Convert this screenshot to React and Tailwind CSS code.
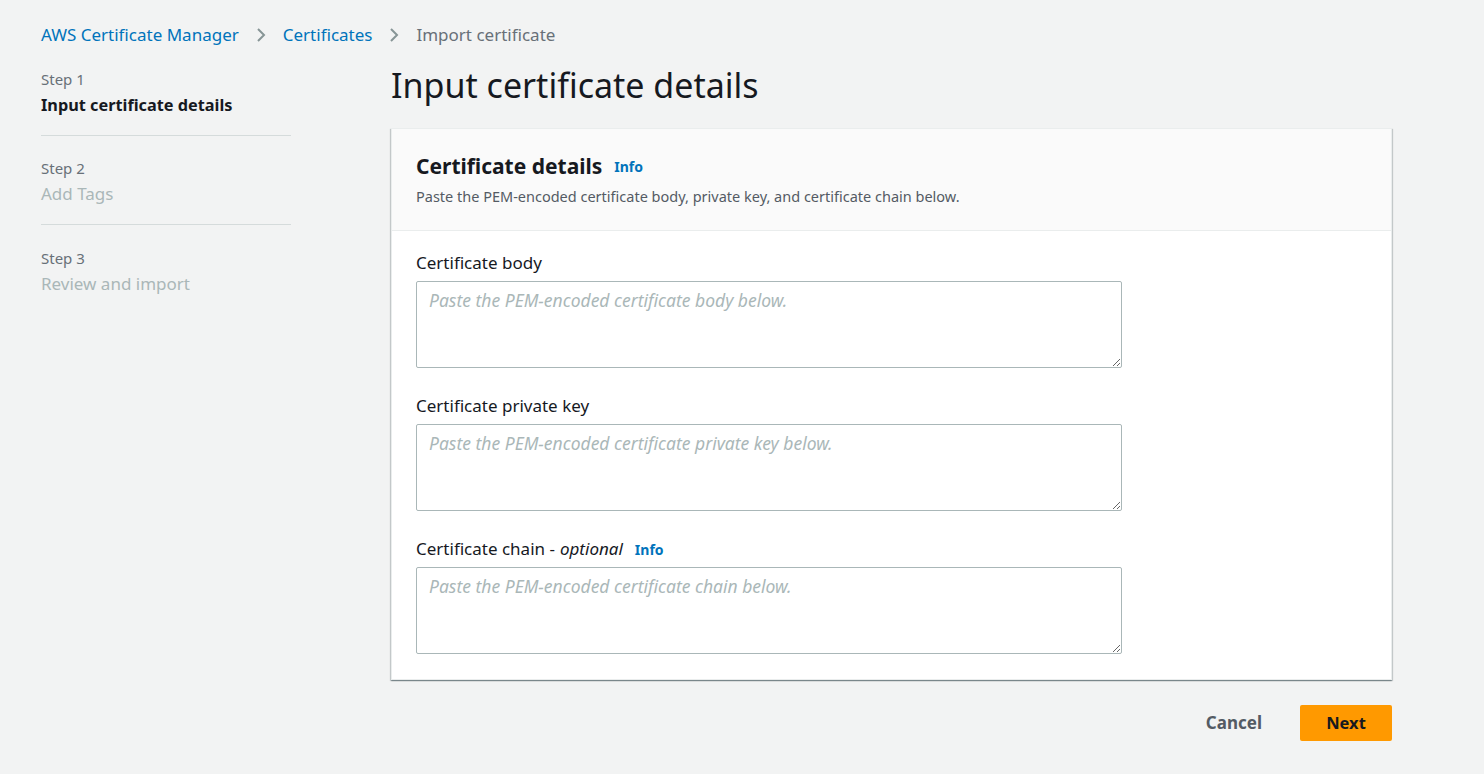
import React from 'react';

const Chevron = () => (
  <svg width="16" height="16" viewBox="0 0 16 16" className="mx-[14px] shrink-0">
    <path d="M5 2l6 6-6 6" fill="none" stroke="#879596" strokeWidth="2" />
  </svg>
);

const Field = ({ label, placeholder, optional, info }) => (
  <div className="mb-[27px] last:mb-[25px]">
    <div className="flex items-center h-[22px] mb-[7px] text-[17px] text-[#16191f]">
      <span>{label}</span>
      {optional && <span className="italic ml-[5px]">optional</span>}
      {info && <span className="ml-[12px] text-[14px] font-bold text-[#0073bb]">Info</span>}
    </div>
    <textarea
      placeholder={placeholder}
      className="block w-[706px] h-[87px] border border-[#aab7b8] rounded-[2px] bg-white px-[12px] py-[6px] text-[17.5px] leading-[24px] placeholder:italic placeholder:text-[#aab7b8] outline-none"
    />
  </div>
);

export default function App() {
  return (
    <div className="min-h-screen bg-[#f2f3f3] font-['Noto_Sans',sans-serif] text-[#16191f]">
      <div className="pl-[41px] pt-[22px]">
        <nav className="flex items-center h-[26px] text-[17px]">
          <span className="text-[#0073bb]">AWS Certificate Manager</span>
          <Chevron />
          <span className="text-[#0073bb]">Certificates</span>
          <Chevron />
          <span className="text-[#687078]">Import certificate</span>
        </nav>

        <div className="flex mt-[18px]">
          <aside className="w-[250px] shrink-0 pt-[2px]">
            <div className="pb-[17px] border-b border-[#d5dbdb]">
              <div className="text-[15px] text-[#687078] leading-[22px]">Step 1</div>
              <div className="text-[16.3px] font-bold leading-[26px] mt-[2px]">Input certificate details</div>
            </div>
            <div className="pt-[21px] pb-[17px] border-b border-[#d5dbdb]">
              <div className="text-[15px] text-[#687078] leading-[22px]">Step 2</div>
              <div className="text-[17px] text-[#aab7b8] leading-[26px] mt-[2px]">Add Tags</div>
            </div>
            <div className="pt-[22px]">
              <div className="text-[15px] text-[#687078] leading-[22px]">Step 3</div>
              <div className="text-[17px] text-[#aab7b8] leading-[26px] mt-[2px]">Review and import</div>
            </div>
          </aside>

          <main className="ml-[100px] w-[1001px]">
            <h1 className="text-[34px] leading-[44px] font-normal -mt-[3px] mb-[21px]">Input certificate details</h1>
            <div className="bg-white border border-[#eaeded] shadow-[0_1px_1px_0_rgba(0,28,36,0.3),1px_1px_1px_0_rgba(0,28,36,0.15),-1px_1px_1px_0_rgba(0,28,36,0.15)]">
              <div className="bg-[#fafafa] border-b border-[#eaeded] px-[24px] pt-[23px] pb-[23px]">
                <div className="flex items-center">
                  <h2 className="text-[21px] font-bold leading-[28px]">Certificate details</h2>
                  <span className="ml-[12px] text-[14px] font-bold text-[#0073bb]">Info</span>
                </div>
                <p className="text-[14.5px] text-[#545b64] leading-[22px] mt-[5px]">
                  Paste the PEM-encoded certificate body, private key, and certificate chain below.
                </p>
              </div>
              <div className="px-[24px] pt-[21px]">
                <Field label="Certificate body" placeholder="Paste the PEM-encoded certificate body below." />
                <Field label="Certificate private key" placeholder="Paste the PEM-encoded certificate private key below." />
                <Field label="Certificate chain -" optional info placeholder="Paste the PEM-encoded certificate chain below." />
              </div>
            </div>

            <div className="flex justify-end items-center mt-[25px]">
              <button className="text-[17px] font-bold text-[#545b64] px-[20px] h-[36px] mr-[18px]">Cancel</button>
              <button className="w-[92px] h-[36px] bg-[#ff9900] rounded-[2px] text-[16.5px] font-bold text-[#16191f]">Next</button>
            </div>
          </main>
        </div>
      </div>
    </div>
  );
}
